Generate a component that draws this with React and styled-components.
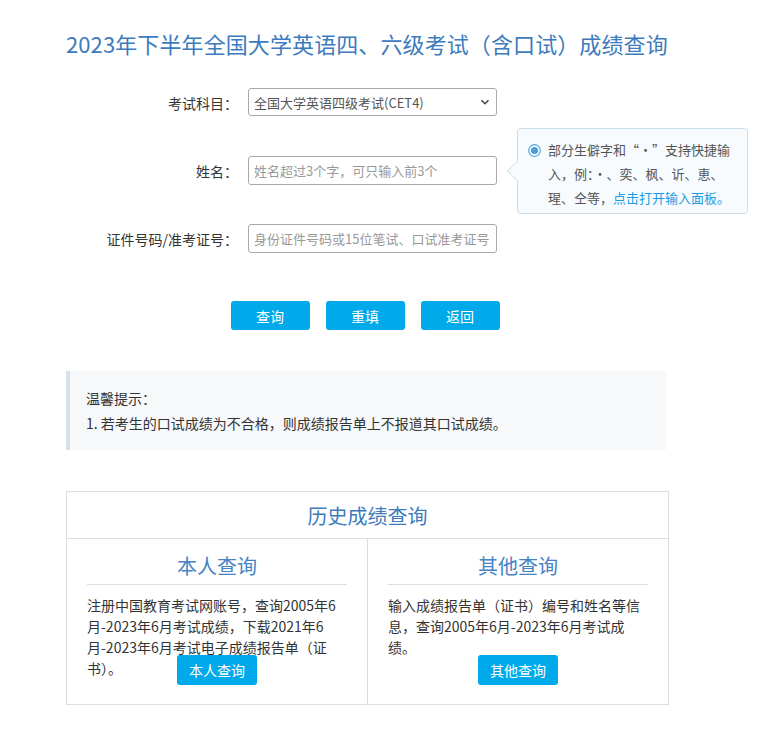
import styled, { createGlobalStyle } from 'styled-components';

const GlobalStyle = createGlobalStyle`
  * { box-sizing: border-box; }
  body {
    margin: 0;
    background: #fff;
    font-family: "Liberation Sans", "Noto Sans CJK SC", sans-serif;
    color: #333;
  }
`;

function Chevron() {
  return (
    <svg width="10" height="10" viewBox="0 0 10 10">
      <path d="M1.5 3.2 L5 6.7 L8.5 3.2" fill="none" stroke="#444" strokeWidth="1.6" />
    </svg>
  );
}

function RadioDot() {
  return (
    <svg width="13" height="13" viewBox="0 0 13 13">
      <circle cx="6.5" cy="6.5" r="5.8" fill="#fff" stroke="#5aa7dc" strokeWidth="1.2" />
      <circle cx="6.5" cy="6.5" r="3.6" fill="#4b9fdb" />
    </svg>
  );
}

const fields = [
  { label: '考试科目：', type: 'select', value: '全国大学英语四级考试(CET4)' },
  { label: '姓名：', type: 'input', placeholder: '姓名超过3个字，可只输入前3个', tip: true },
  { label: '证件号码/准考证号：', type: 'input', placeholder: '身份证件号码或15位笔试、口试准考证号' },
];

const history = [
  {
    title: '本人查询',
    text: '注册中国教育考试网账号，查询2005年6月-2023年6月考试成绩，下载2021年6月-2023年6月考试电子成绩报告单（证书）。',
  },
  {
    title: '其他查询',
    text: '输入成绩报告单（证书）编号和姓名等信息，查询2005年6月-2023年6月考试成绩。',
  },
];

export default function App() {
  return (
    <Page>
      <GlobalStyle />
      <Title>2023年下半年全国大学英语四、六级考试（含口试）成绩查询</Title>
      <Form>
        {fields.map(f => (
          <Row key={f.label}>
            <Label>{f.label}</Label>
            <Field>
              {f.type === 'select' ? (
                <Select>
                  <span>{f.value}</span>
                  <Chevron />
                </Select>
              ) : (
                <Input placeholder={f.placeholder} />
              )}
              {f.tip && (
                <Tooltip>
                  <RadioWrap><RadioDot /></RadioWrap>
                  <TipText>
                    部分生僻字和“·”支持快捷输入，例：·、奕、枫、䜣、恵、瑆、仝等，<TipLink>点击打开输入面板。</TipLink>
                  </TipText>
                </Tooltip>
              )}
            </Field>
          </Row>
        ))}
      </Form>
      <Buttons>
        <Button>查询</Button>
        <Button>重填</Button>
        <Button>返回</Button>
      </Buttons>
      <Notice>
        <p>温馨提示：</p>
        <p>1. 若考生的口试成绩为不合格，则成绩报告单上不报道其口试成绩。</p>
      </Notice>
      <History>
        <HistoryHead>历史成绩查询</HistoryHead>
        <Columns>
          {history.map(h => (
            <Column key={h.title}>
              <ColTitle>{h.title}</ColTitle>
              <ColText>{h.text}</ColText>
              <SmallButton>{h.title}</SmallButton>
            </Column>
          ))}
        </Columns>
      </History>
    </Page>
  );
}

const Page = styled.div`
  width: 776px;
  padding: 28px 0 40px 66px;
`;

const Title = styled.h1`
  margin: 0;
  font-family: "Noto Sans CJK SC", sans-serif;
  font-size: 22px;
  font-weight: 400;
  line-height: 30px;
  color: #3c7bbd;
  letter-spacing: 0.1px;
`;

const Form = styled.div`
  margin-top: 30px;
  display: flex;
  flex-direction: column;
  gap: 39px;
`;

const Row = styled.div`
  display: flex;
  align-items: center;
  height: 29px;
`;

const Label = styled.div`
  width: 172px;
  text-align: right;
  font-family: "Noto Sans CJK SC", sans-serif;
  font-size: 14px;
  color: #333;
  margin-right: 10px;
`;

const Field = styled.div`
  position: relative;
  width: 249px;
  height: 29px;
`;

const Select = styled.div`
  height: 28px;
  border: 1px solid #a9a9a9;
  border-radius: 3px;
  display: flex;
  align-items: center;
  justify-content: space-between;
  padding: 0 6px 0 5px;
  font-family: "Noto Sans CJK SC", sans-serif;
  font-size: 13px;
  color: #555;
  background: #fff;
`;

const Input = styled.input`
  width: 100%;
  height: 29px;
  border: 1px solid #a9a9a9;
  border-radius: 3px;
  padding: 0 5px;
  font-family: "Noto Sans CJK SC", sans-serif;
  font-size: 13px;
  color: #333;
  outline: none;
  &::placeholder { color: #999; }
`;

const Tooltip = styled.div`
  position: absolute;
  left: 269px;
  top: 50%;
  transform: translateY(-50%);
  width: 231px;
  height: 86px;
  border: 1px solid #c9dcea;
  border-radius: 4px;
  background: #f7fbfe;
  padding: 11px 12px 0 10px;
  display: flex;
  align-items: flex-start;
  &::before, &::after {
    content: '';
    position: absolute;
    top: 50%;
    transform: translateY(-50%);
    border-style: solid;
    border-color: transparent;
  }
  &::before {
    left: -11px;
    border-width: 11px 11px 11px 0;
    border-right-color: #c9dcea;
  }
  &::after {
    left: -10px;
    border-width: 10px 10px 10px 0;
    border-right-color: #f7fbfe;
  }
`;

const RadioWrap = styled.div`
  flex: none;
  width: 13px;
  height: 13px;
  margin: 4px 7px 0 0;
  display: flex;
`;

const TipText = styled.div`
  font-family: "Noto Sans CJK SC", sans-serif;
  font-size: 13px;
  line-height: 24px;
  color: #555;
  margin-top: -2px;
`;

const TipLink = styled.span`
  color: #1a9de6;
`;

const Buttons = styled.div`
  margin-top: 48px;
  width: 602px;
  display: flex;
  justify-content: center;
  gap: 16px;
  padding-right: 4px;
`;

const Button = styled.button`
  width: 79px;
  height: 29px;
  border: none;
  border-radius: 3px;
  background: #00a9ea;
  color: #fff;
  font-family: "Noto Sans CJK SC", sans-serif;
  font-size: 14px;
  padding: 0;
`;

const Notice = styled.div`
  margin-top: 41px;
  width: 600px;
  background: #f7f8fa;
  border-left: 4px solid #d6e1ed;
  padding: 15px 16px 14px 16px;
  font-family: "Noto Sans CJK SC", sans-serif;
  font-size: 14px;
  line-height: 25px;
  color: #333;
  p { margin: 0; }
`;

const History = styled.div`
  margin-top: 41px;
  width: 603px;
  border: 1px solid #ddd;
`;

const HistoryHead = styled.div`
  height: 47px;
  display: flex;
  align-items: center;
  justify-content: center;
  border-bottom: 1px solid #ddd;
  font-family: "Noto Sans CJK SC", sans-serif;
  font-size: 20px;
  color: #3c7bbd;
`;

const Columns = styled.div`
  display: grid;
  grid-template-columns: 300px 1fr;
`;

const Column = styled.div`
  padding: 12px 20px 19px 20px;
  display: flex;
  flex-direction: column;
  align-items: center;
  & + & { border-left: 1px solid #ddd; }
`;

const ColTitle = styled.div`
  width: 100%;
  text-align: center;
  font-family: "Noto Sans CJK SC", sans-serif;
  font-size: 20px;
  line-height: 30px;
  color: #4583c4;
  padding-bottom: 3px;
  border-bottom: 1px solid #ddd;
`;

const ColText = styled.p`
  margin: 10px 0 0 0;
  width: 100%;
  height: 60px;
  font-family: "Noto Sans CJK SC", sans-serif;
  font-size: 14px;
  line-height: 21px;
  color: #333;
`;

const SmallButton = styled(Button)`
  width: 80px;
  height: 30px;
  font-size: 14px;
`;
